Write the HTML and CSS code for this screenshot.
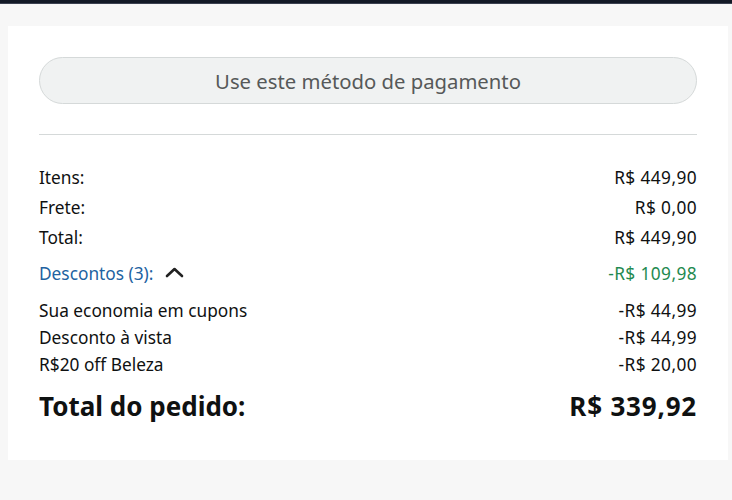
FILE: index.html
```html
<!DOCTYPE html>
<html lang="pt-BR">
<head>
<meta charset="utf-8">
<link rel="stylesheet" href="styles.css">
</head>
<body>
<div class="topbar"></div>
<main class="card">
  <button class="pay-btn" type="button">Use este método de pagamento</button>
  <hr class="divider">
  <div class="summary">
    <div class="row"><span>Itens:</span><span class="amt">R$ 449,90</span></div>
    <div class="row"><span>Frete:</span><span class="amt">R$ 0,00</span></div>
    <div class="row"><span>Total:</span><span class="amt">R$ 449,90</span></div>
    <div class="row disc">
      <span class="link">Descontos (3):
        <svg class="chev" width="19" height="12" viewBox="0 0 19 12"><path d="M2 10 L9.5 3 L17 10" fill="none" stroke="#222" stroke-width="2.6" stroke-linecap="round" stroke-linejoin="round"/></svg>
      </span>
      <span class="green amt">-R$ 109,98</span>
    </div>
    <div class="sub">
      <div class="row s"><span>Sua economia em cupons</span><span class="amt">-R$ 44,99</span></div>
      <div class="row s"><span>Desconto à vista</span><span class="amt">-R$ 44,99</span></div>
      <div class="row s"><span>R$20 off Beleza</span><span class="amt">-R$ 20,00</span></div>
    </div>
    <div class="row grand"><span>Total do pedido:</span><span class="amt">R$ 339,92</span></div>
  </div>
</main>
</body>
</html>
```
FILE: styles.css
```css
html, body {
  margin: 0;
  padding: 0;
  background: #f7f7f7;
  font-family: "Noto Sans", "Open Sans", sans-serif;
  color: #0f1111;
}
.topbar {
  height: 3px;
  background: #131a26;
  border-bottom: 1px solid #3b4150;
}
.card {
  display: block;
  margin: 22px 4px 0 8px;
  background: #fff;
  padding: 31px 31px 0 31px;
  height: 434px;
  box-sizing: border-box;
}
.pay-btn {
  display: block;
  width: 100%;
  height: 47px;
  border-radius: 24px;
  border: 1px solid #d5d9d9;
  background: #f0f2f2;
  color: #565959;
  font-family: inherit;
  font-size: 20.3px;
  padding: 0;
}
.divider {
  border: 0;
  border-top: 1px solid #d5d9d9;
  margin: 30px 0 0 0;
}
.summary {
  display: flex;
  flex-direction: column;
  padding-top: 27px;
}
.row {
  display: flex;
  justify-content: space-between;
  align-items: center;
  font-size: 17.3px;
  height: 30px;
}
.amt { letter-spacing: 0.4px; }
.row.disc { height: 42px; }
.link {
  color: #2162a1;
  display: flex;
  align-items: center;
  gap: 12px;
}
.chev { display: block; margin-top: -3px; }
.green { color: #1f8a50; }
.sub { display: flex; flex-direction: column; padding-top: 3px; }
.row.s { height: 27px; }
.row.grand {
  font-size: 26px;
  font-weight: 700;
  height: 44px;
  margin-top: 6px;
}
.row.grand .amt { letter-spacing: 0.8px; }
```
